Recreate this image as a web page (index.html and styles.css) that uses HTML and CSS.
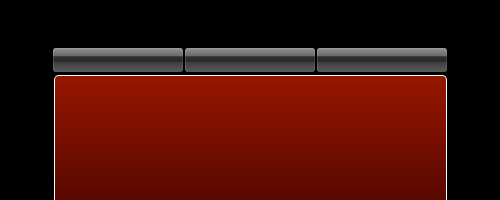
FILE: index.html
```html
<!DOCTYPE html>
<html lang="en">
<head>
    <meta charset="UTF-8">
    <title>Tabs</title>
    <link rel="stylesheet" href="styles.css">
</head>
<body>
    <div class="wrap">
        <div class="tabs">
            <div class="tab"></div>
            <div class="tab"></div>
            <div class="tab"></div>
        </div>
        <div class="panel"></div>
    </div>
</body>
</html>
```
FILE: styles.css
```css
html, body {
    margin: 0;
    padding: 0;
    background-color: #000;
    font-family: "Liberation Sans", Arial, sans-serif;
}
.wrap {
    width: 394px;
    padding: 48px 0 0 53px;
}
.tabs {
    display: flex;
    gap: 2px;
}
.tab {
    width: 130px;
    height: 24px;
    border-radius: 3px;
    background: linear-gradient(#a0a0a0 0, #8a8a8a 6%, #7a7a7a 20%, #676767 34%, #2e2e2e 36%, #2b2b2b 58%, #3e3e3e 60%, #4d4d4d 80%, #585858 100%);
    box-shadow: inset 1px 0 0 rgba(255,255,255,0.15), inset -1px 0 0 rgba(255,255,255,0.1);
}
.panel {
    margin: 3px 0 0 1px;
    height: 124px;
    border: 1px solid #fff;
    border-bottom: none;
    border-radius: 5px 5px 0 0;
    background: linear-gradient(#951700 0, #7d1000 45%, #580800 100%);
}
```
